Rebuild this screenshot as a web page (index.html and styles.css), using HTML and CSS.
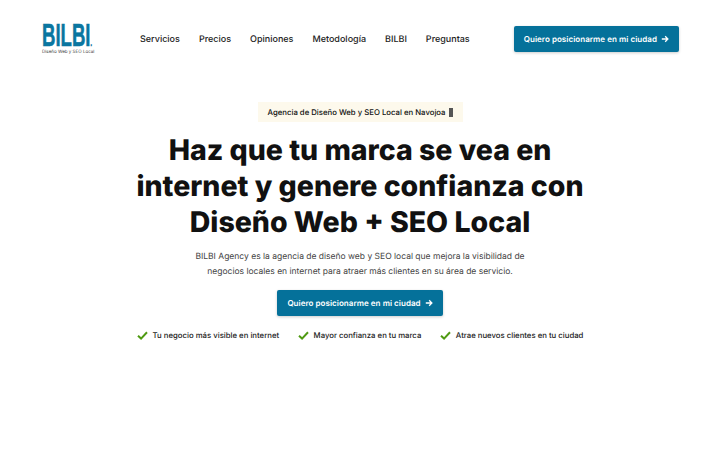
FILE: index.html
```html
<!DOCTYPE html>
<html lang="es">
<head>
    <meta charset="UTF-8">
    <meta name="viewport" content="width=device-width, initial-scale=1.0">
    <title>BILBI Agency</title>
    <link rel="stylesheet" href="styles.css">
</head>
<body>
    <header class="header">
        <a class="logo" href="#">
            <span class="logo-name">BILBI<span class="logo-dot">.</span></span>
            <span class="logo-tag">Diseño Web y SEO Local</span>
        </a>
        <nav class="nav">
            <a href="#">Servicios</a>
            <a href="#">Precios</a>
            <a href="#">Opiniones</a>
            <a href="#">Metodología</a>
            <a href="#">BILBI</a>
            <a href="#">Preguntas</a>
        </nav>
        <a class="button" href="#">
            <span>Quiero posicionarme en mi ciudad</span>
            <svg class="arrow" viewBox="0 0 10 10" fill="none" stroke="currentColor" stroke-width="1.6">
                <path d="M1 5h7.5M5.2 1.6L8.6 5L5.2 8.4"/>
            </svg>
        </a>
    </header>

    <main class="hero">
        <p class="badge">Agencia de Diseño Web y SEO Local en Navojoa <span class="badge-box"></span></p>
        <h1 class="title">Haz que tu marca se vea en internet y genere confianza con Diseño Web + SEO Local</h1>
        <p class="lead">BILBI Agency es la agencia de diseño web y SEO local que mejora la visibilidad de negocios locales en internet para atraer más clientes en su área de servicio.</p>
        <a class="button" href="#">
            <span>Quiero posicionarme en mi ciudad</span>
            <svg class="arrow" viewBox="0 0 10 10" fill="none" stroke="currentColor" stroke-width="1.6">
                <path d="M1 5h7.5M5.2 1.6L8.6 5L5.2 8.4"/>
            </svg>
        </a>
        <ul class="checks">
            <li>
                <svg class="check" viewBox="0 0 12 10" fill="none" stroke="currentColor" stroke-width="2.2"><path d="M1 5.2L4.4 8.4L11 1.4"/></svg>
                Tu negocio más visible en internet
            </li>
            <li>
                <svg class="check" viewBox="0 0 12 10" fill="none" stroke="currentColor" stroke-width="2.2"><path d="M1 5.2L4.4 8.4L11 1.4"/></svg>
                Mayor confianza en tu marca
            </li>
            <li>
                <svg class="check" viewBox="0 0 12 10" fill="none" stroke="currentColor" stroke-width="2.2"><path d="M1 5.2L4.4 8.4L11 1.4"/></svg>
                Atrae nuevos clientes en tu ciudad
            </li>
        </ul>
    </main>
</body>
</html>
```

FILE: styles.css
```css
* {
    margin: 0;
    padding: 0;
    box-sizing: border-box;
    font-family: Inter, "Liberation Sans", sans-serif;
}

body {
    background-color: #fff;
    color: #1f1f1f;
    height: 450px;
    overflow: hidden;
    text-rendering: geometricPrecision;
}

a {
    color: inherit;
    text-decoration: none;
}

.header {
    display: flex;
    align-items: center;
    height: 78px;
    padding: 0 41px 0 42px;
}

.logo {
    display: flex;
    flex-direction: column;
    gap: 2px;
    width: 98px;
}

.logo-name {
    font-family: "Liberation Sans", sans-serif;
    font-size: 32px;
    font-weight: 700;
    line-height: 25px;
    color: #0a76a0;
    -webkit-text-stroke: 0.6px #0a76a0;
    transform: scaleX(0.58);
    transform-origin: left center;
    white-space: nowrap;
}

.logo-dot {
    font-family: inherit;
    font-size: 9px;
    line-height: 0;
}

.logo-tag {
    font-size: 4.5px;
    line-height: 6px;
    color: #444;
    white-space: nowrap;
}

.nav {
    display: flex;
    gap: 19px;
    font-size: 9px;
    font-weight: 500;
    color: #222;
    flex: 1;
}

.button {
    display: inline-flex;
    align-items: center;
    gap: 4px;
    height: 26px;
    padding: 0 10px;
    background-color: #05719a;
    color: #fff;
    border-radius: 2px;
    font-size: 8px;
    font-weight: 600;
    letter-spacing: 0.05px;
    box-shadow: 0 1px 3px rgba(0, 0, 0, 0.2);
}

.arrow {
    width: 8px;
    height: 8px;
}

.hero {
    display: flex;
    flex-direction: column;
    align-items: center;
    padding-top: 24px;
}

.badge {
    display: flex;
    align-items: center;
    gap: 3px;
    height: 20px;
    padding: 0 10px;
    background-color: #fdf9ec;
    font-size: 7.75px;
    font-weight: 500;
    color: #111;
}

.badge-box {
    width: 4px;
    height: 9px;
    background-color: #555;
}

.title {
    width: 470px;
    margin-top: 10px;
    font-size: 28.5px;
    font-weight: 800;
    line-height: 36px;
    text-align: center;
    color: #111;
}

.lead {
    width: 340px;
    margin-top: 10px;
    font-size: 8.5px;
    line-height: 14.5px;
    text-align: center;
    color: #444;
}

.hero .button {
    margin-top: 11px;
}

.checks {
    display: flex;
    gap: 18.5px;
    margin-top: 14px;
    list-style: none;
    font-size: 7.75px;
    font-weight: 500;
    color: #222;
}

.checks li {
    display: flex;
    align-items: center;
    gap: 5px;
}

.check {
    width: 11px;
    height: 9px;
    color: #4f9a12;
}
```
